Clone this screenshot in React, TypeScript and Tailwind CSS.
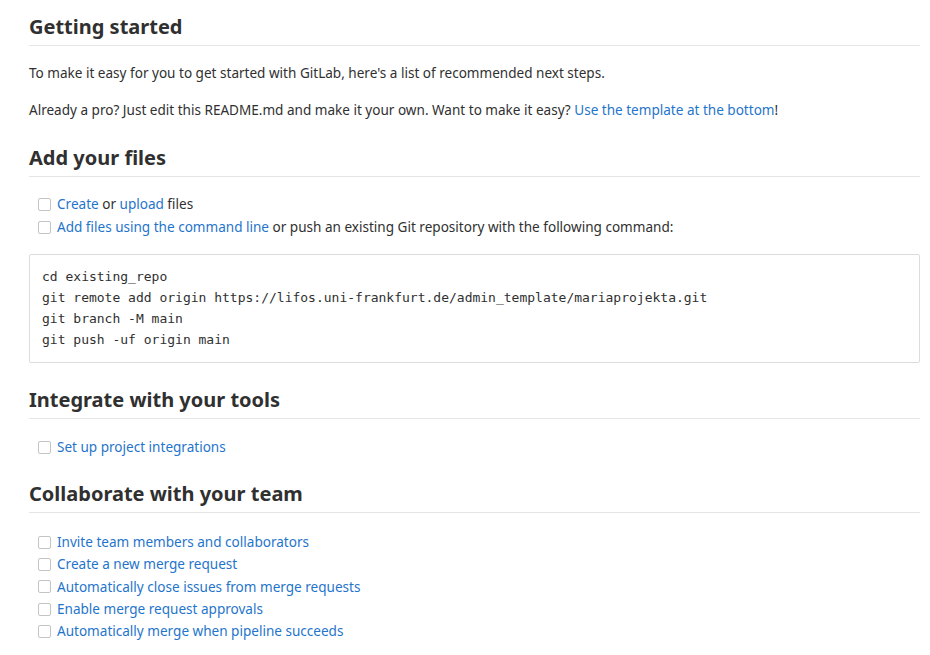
import React from "react";

const Check = () => (
  <span className="inline-block w-[13px] h-[13px] border-[1.5px] border-[#c4c4c4] rounded-[2px] bg-white mr-[6px] shrink-0" />
);

const A = ({ children }: { children: React.ReactNode }) => (
  <a className="text-[#1f75cb] no-underline">{children}</a>
);

const H2 = ({ children, className = "" }: { children: React.ReactNode; className?: string }) => (
  <h2 className={`text-[20px] leading-[28px] font-bold text-[#303030] border-b border-[#e5e5e5] pb-[4px] ${className}`}>
    {children}
  </h2>
);

const Item = ({ children, h = "h-[22.25px]" }: { children: React.ReactNode; h?: string }) => (
  <li className={`flex items-center pl-[9px] ${h}`}>
    <Check />
    <span>{children}</span>
  </li>
);

export default function App() {
  return (
    <div
      className="bg-white w-[930px] h-[655px] overflow-hidden pl-[29px] pr-[10px] pt-[13px] text-[13.55px] text-[#303030]"
      style={{ fontFamily: '"Noto Sans", "Open Sans", sans-serif' }}
    >
      <H2>Getting started</H2>
      <p className="mt-[17px] leading-[20px]">
        To make it easy for you to get started with GitLab, here's a list of recommended next steps.
      </p>
      <p className="mt-[17px] leading-[20px]">
        Already a pro? Just edit this README.md and make it your own. Want to make it easy?{" "}
        <A>Use the template at the bottom</A>!
      </p>

      <H2 className="mt-[24px]">Add your files</H2>
      <ul className="mt-[16px]">
        <Item h="h-[23px]">
          <A>Create</A>&nbsp;or&nbsp;<A>upload</A>&nbsp;files
        </Item>
        <Item h="h-[23px]">
          <A>Add files using the command line</A>&nbsp;or push an existing Git repository with the following command:
        </Item>
      </ul>
      <pre
        className="mt-[15px] border border-[#dcdcde] rounded-[2px] bg-white px-[12px] pt-[11px] pb-[12px] text-[13px] leading-[21px] text-[#303030]"
        style={{ fontFamily: '"DejaVu Sans Mono", monospace' }}
      >
{`cd existing_repo
git remote add origin https://lifos.uni-frankfurt.de/admin_template/mariaprojekta.git
git branch -M main
git push -uf origin main`}
      </pre>

      <H2 className="mt-[23px]">Integrate with your tools</H2>
      <ul className="mt-[17px]">
        <Item>
          <A>Set up project integrations</A>
        </Item>
      </ul>

      <H2 className="mt-[22px]">Collaborate with your team</H2>
      <ul className="mt-[18px]">
        <Item><A>Invite team members and collaborators</A></Item>
        <Item><A>Create a new merge request</A></Item>
        <Item><A>Automatically close issues from merge requests</A></Item>
        <Item><A>Enable merge request approvals</A></Item>
        <Item><A>Automatically merge when pipeline succeeds</A></Item>
      </ul>
    </div>
  );
}
